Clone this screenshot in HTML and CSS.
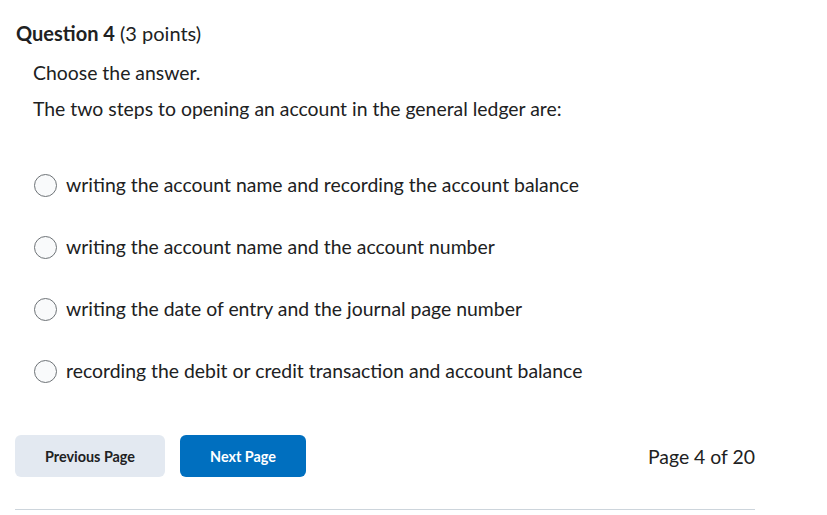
FILE: index.html
```html
<!DOCTYPE html>
<html lang="en">
<head>
    <meta charset="UTF-8" />
    <title>Question 4</title>
    <link rel="stylesheet" href="styles.css">
</head>
<body>
    <div class="quiz">
        <h2 class="q-title"><strong>Question 4</strong> (3 points)</h2>
        <div class="q-body">
            <p class="q-text">Choose the answer.</p>
            <p class="q-text">The two steps to opening an account in the general ledger are:</p>

            <ul class="options">
                <li><label><span class="radio"></span>writing the account name and recording the account balance</label></li>
                <li><label><span class="radio"></span>writing the account name and the account number</label></li>
                <li><label><span class="radio"></span>writing the date of entry and the journal page number</label></li>
                <li><label><span class="radio"></span>recording the debit or credit transaction and account balance</label></li>
            </ul>
        </div>

        <div class="pager">
            <button class="btn btn-prev">Previous Page</button>
            <button class="btn btn-next">Next Page</button>
            <span class="page-count">Page 4 of 20</span>
        </div>
        <hr class="divider">
    </div>
</body>
</html>
```

FILE: styles.css
```css
* {
    margin: 0;
    padding: 0;
    box-sizing: border-box;
}

ul {
    list-style: none;
}

body {
    font-family: Lato, "Open Sans", sans-serif;
    color: #202122;
    background: #fff;
}

.quiz {
    width: 740px;
    margin-left: 15px;
    padding-top: 21px;
}

.q-title {
    font-size: 20px;
    font-weight: 400;
    line-height: 24px;
    padding-left: 1px;
}

.q-title strong {
    font-weight: 700;
}

.q-body {
    padding-left: 18px;
}

.q-text {
    font-size: 19.4px;
    line-height: 24px;
    margin-top: 16px;
}

.q-text + .q-text {
    margin-top: 12px;
}

.options {
    margin-top: 52px;
}

.options li {
    height: 62px;
}

.options label {
    display: flex;
    align-items: center;
    gap: 9px;
    font-size: 19.4px;
    line-height: 24px;
}

.radio {
    width: 23px;
    height: 23px;
    border: 1px solid #6e7377;
    border-radius: 50%;
    background: #f9fafb;
    flex-shrink: 0;
    margin-left: 1px;
}

.pager {
    display: flex;
    align-items: center;
    gap: 15px;
    margin-top: 14px;
}

.btn {
    height: 42px;
    border: none;
    border-radius: 6px;
    font-family: Lato, sans-serif;
    font-size: 14.4px;
    font-weight: 700;
    padding: 0;
}

.btn-prev {
    width: 150px;
    background: #e3e9f1;
    color: #202122;
}

.btn-next {
    width: 126px;
    background: #006fbf;
    color: #fff;
}

.page-count {
    margin-left: auto;
    font-size: 19.4px;
}

.divider {
    margin-top: 32px;
    border: none;
    border-top: 1px solid #cdd5dc;
}
```
